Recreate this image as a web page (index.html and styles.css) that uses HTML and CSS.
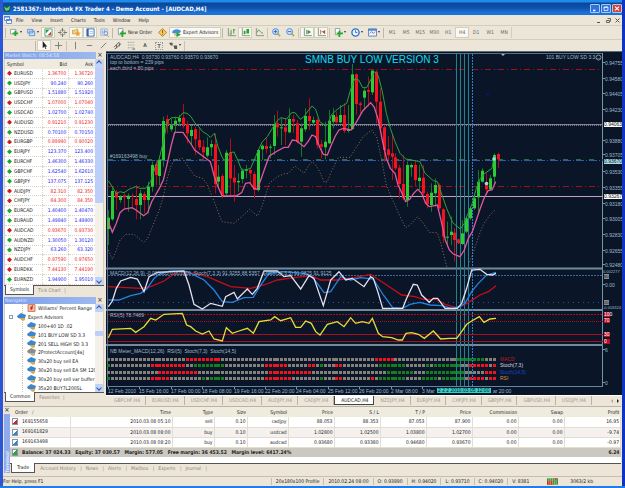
FILE: index.html
```html
<!DOCTYPE html>
<html lang="en">
<head>
<meta charset="utf-8">
<title>Interbank FX Trader 4</title>
<link rel="stylesheet" href="styles.css">
</head>
<body>
<div class="window">
  <header class="titlebar">
    <svg class="app-icon" viewBox="0 0 8 8"><path fill="#1b5a4a" d="M0 1h7v6H1z"/><path fill="#5fd08a" d="M1 2l3 1 3-2-1 4-3 1z"/></svg>
    <h1>2581367: Interbank FX Trader 4 - Demo Account - [AUDCAD,H4]</h1>
    <button class="win-btn" aria-label="Minimize"><svg viewBox="0 0 9 9"><path d="M2 7h3" stroke="#fff" stroke-width="2"/></svg></button>
    <button class="win-btn" aria-label="Maximize"><svg viewBox="0 0 9 9"><path d="M2 2.5h5v4.500h-5zM2 3h5" stroke="#fff" fill="none"/></svg></button>
    <button class="win-btn close" aria-label="Close"><svg viewBox="0 0 9 9"><path d="M2 2l5 5M7 2l-5 5" stroke="#fff" stroke-width="1.500"/></svg></button>
  </header>

  <nav class="menubar">
    <svg class="doc-icon" viewBox="0 0 8 8"><path fill="#fff" stroke="#6a94d8" d="M.5.5h5v4h-5zM2.500 3.500h5v4h-5z"/><path stroke="#3b72d0" d="M0 1h6M2 4h6"/></svg>
    <button>File</button><button>View</button><button>Insert</button><button>Charts</button><button>Tools</button><button>Window</button><button>Help</button>
    <span class="spacer"></span>
    <button class="mdi" aria-label="Minimize chart"><svg viewBox="0 0 7 7"><path d="M1 5.500h3" stroke="#555"/></svg></button>
    <button class="mdi" aria-label="Restore chart"><svg viewBox="0 0 7 7"><path d="M2.500 1.500h3v3M1.500 3.500h3v2h-3z" fill="none" stroke="#666"/></svg></button>
    <button class="mdi" aria-label="Close chart"><svg viewBox="0 0 7 7"><path d="M1.500 1.500l4 4M5.500 1.500l-4 4" stroke="#555"/></svg></button>
  </nav>

  <div class="toolbar">
    <i class="grip"></i>
    <button class="tool drop" aria-label="New chart"><svg viewBox="0 0 10 10"><path fill="#fff" stroke="#8a9cae" d="M.5 1.500h6v5h-6z"/><path fill="#22a82e" d="M5 3h2v2h2v2H7v2H5V7H3V5h2z"/></svg></button>
    <button class="tool drop" aria-label="Profiles"><svg viewBox="0 0 10 10"><path fill="#cfe3fa" stroke="#5d8fd0" d="M.5 1.500h6v4h-6zM2.500 3.500h6v5h-6z"/></svg></button>
    <button class="tool on" aria-label="Market watch"><svg viewBox="0 0 10 10"><path fill="#fff" stroke="#4a9a74" d="M1 1h8v8H1z"/><path fill="#2b9c3e" d="M2 2h4L2 6z"/><path fill="#dd3c28" d="M8 8H4l4-4z"/></svg></button>
    <button class="tool" aria-label="Data window"><svg viewBox="0 0 10 10"><circle cx="5" cy="5" r="3" fill="none" stroke="#8c8c84"/><path stroke="#6f6f6a" d="M5 0v4M5 6v4M0 5h4M6 5h4"/></svg></button>
    <button class="tool on" aria-label="Navigator"><svg viewBox="0 0 10 10"><path fill="#f5d37a" stroke="#caa04a" d="M.5 2.500h3l1-1h2v5h-6z"/><path fill="#f0a030" d="M6.500 3l1 2 2.500.3-2 1.500.6 2.500-2.100-1.300-2.200 1.300.7-2.500-2-1.500 2.500-.3z"/></svg></button>
    <button class="tool on" aria-label="Terminal"><svg viewBox="0 0 10 10"><path fill="#fff" stroke="#2f66b8" d="M1 1h8v8H1z"/><path fill="#2f66b8" d="M1 1h2v8H1z"/><path stroke="#a8c0e0" d="M4 4h4M4 6h4"/></svg></button>
    <button class="tool" aria-label="Strategy tester"><svg viewBox="0 0 10 10"><path fill="#dbe6f4" stroke="#9db4d4" d="M1 1h7v7H1z"/><path fill="none" stroke="#7d9cc8" d="M3 6V3M5 6V2"/><circle cx="6.500" cy="6" r="2" fill="#eef" stroke="#6288c0"/><path stroke="#c0a050" d="M8 8l2 2"/></svg></button>
    <i class="grip"></i>
    <button class="tool text"><svg viewBox="0 0 10 10"><path fill="#fff" stroke="#8b98a8" d="M1.500.5h5v7h-5z"/><path fill="#22a82e" d="M5 3h2v2h3v2H7v3H5V7H3V5h2z"/></svg>New Order</button>
    <button class="tool" aria-label="MetaEditor"><svg viewBox="0 0 10 10"><path fill="#f2c95a" stroke="#b9832c" d="M5 .5L9.500 5 5 9.500.5 5z"/><path stroke="#8a4f18" d="M5 2.500v3M5 6.500v1"/></svg></button>
    <button class="tool text on"><svg viewBox="0 0 10 10"><path fill="#3f8fe0" d="M0 5c1-4 8-5 10-1L8 6H2z"/><path fill="#e8c060" d="M2 6h5v3H3z"/><path fill="#22a82e" d="M5 5l5 2.500L5 10z"/></svg>Expert Advisors</button>
    <i class="grip"></i>
    <button class="tool" aria-label="Bar chart"><svg viewBox="0 0 10 10"><path fill="none" stroke="#8c8c80" d="M1.500 0v8.500H10"/><path stroke="#2fa03a" d="M4.500 2v6M7.500 1v5M3 6h1M7 2h2" /></svg></button>
    <button class="tool on" aria-label="Candlesticks"><svg viewBox="0 0 10 10"><path fill="none" stroke="#8c8c80" d="M1.500 0v8.500H10"/><path fill="#25a52f" d="M3 3h2v4H3zM6 1h3v5H6z"/></svg></button>
    <button class="tool" aria-label="Line chart"><svg viewBox="0 0 10 10"><path fill="none" stroke="#8c8c80" d="M1.500 0v8.500H10"/><path fill="none" stroke="#3aa545" d="M2 5l2-3 3 3 2 1"/></svg></button>
    <i class="sep"></i>
    <button class="tool" aria-label="Zoom in"><svg viewBox="0 0 10 10"><path stroke="#d2a640" stroke-width="2" d="M6 6l3 3"/><circle cx="4" cy="4" r="3.300" fill="#cfe6fb" stroke="#4486d4"/><path stroke="#2765b8" d="M2 4h4M4 2v4"/></svg></button>
    <button class="tool" aria-label="Zoom out"><svg viewBox="0 0 10 10"><path stroke="#d2a640" stroke-width="2" d="M6 6l3 3"/><circle cx="4" cy="4" r="3.300" fill="#cfe6fb" stroke="#4486d4"/><path stroke="#2765b8" d="M2 4h4"/></svg></button>
    <i class="sep"></i>
    <button class="tool on" aria-label="Auto scroll"><svg viewBox="0 0 10 10"><path fill="none" stroke="#7c8c80" d="M1.500 0v8.500H10M4 2v5"/><path fill="#25a52f" d="M5 2l4 2.500L5 7z"/></svg></button>
    <button class="tool on" aria-label="Chart shift"><svg viewBox="0 0 10 10"><path fill="none" stroke="#7c8c80" d="M1.500 0v8.500H10M4 2v5M5 4h2"/><path fill="#d04030" d="M9 2v5L6 4.500z"/></svg></button>
    <i class="sep"></i>
    <button class="tool drop" aria-label="Indicators"><svg viewBox="0 0 10 10"><path fill="#fff" stroke="#8b98a8" d="M1.500.5h5v7h-5z"/><path fill="#22a82e" d="M5 3h2v2h3v2H7v3H5V7H3V5h2z"/></svg></button>
    <button class="tool drop" aria-label="Periods"><svg viewBox="0 0 10 10"><circle cx="5" cy="5" r="4" fill="#e8f2fe" stroke="#2f6fca" stroke-width="1.500"/><path fill="none" stroke="#2f6fca" d="M5 2.500V5h2"/></svg></button>
    <button class="tool drop" aria-label="Templates"><svg viewBox="0 0 10 10"><path fill="#eaf3ff" stroke="#4a82cc" d="M.5 1h9v8h-9z"/><path stroke="#4a82cc" stroke-width="2" d="M0 2h10"/><path fill="none" stroke="#c06040" d="M2 6l2-2 2 2 2-2"/></svg></button>
    <i class="grip"></i>
    <div class="periods">
      <button class="tool">M1</button><button class="tool">M5</button><button class="tool">M15</button><button class="tool">M30</button><button class="tool">H1</button><button class="tool on">H4</button><button class="tool">D1</button><button class="tool">W1</button><button class="tool">MN</button>
    </div>
  </div>

  <div class="toolbar drawing">
    <i class="grip"></i>
    <button class="tool on" aria-label="Cursor"><svg viewBox="0 0 10 10"><path fill="#222" d="M3 0v8l2-2 1 3 1-.5L6 6h2z"/></svg></button>
    <button class="tool" aria-label="Crosshair"><svg viewBox="0 0 10 10"><path stroke="#77776f" d="M5 1v8M1 5h8"/></svg></button>
    <i class="sep"></i>
    <button class="tool" aria-label="Vertical line"><svg viewBox="0 0 10 10"><path stroke="#77776f" d="M5 1v8"/></svg></button>
    <button class="tool" aria-label="Horizontal line"><svg viewBox="0 0 10 10"><path stroke="#77776f" d="M2 5h6"/></svg></button>
    <button class="tool" aria-label="Trendline"><svg viewBox="0 0 10 10"><path stroke="#77776f" d="M2 8l6-6"/></svg></button>
    <button class="tool" aria-label="Channel"><svg viewBox="0 0 10 10"><path stroke="#5c5c55" d="M1 7l6-6M2 9l7-6M4 4v4M7 2v4"/></svg></button>
    <button class="tool" aria-label="Fibonacci"><svg viewBox="0 0 10 10"><path stroke="#8c8c84" stroke-dasharray="1 1" d="M1 1.500h8M1 4.500h8M1 7.500h8"/><path stroke="#555" d="M6 9h3"/></svg></button>
    <button class="tool letter">A</button>
    <button class="tool letter"><span class="label-box">T</span></button>
    <button class="tool drop" aria-label="Arrows"><svg viewBox="0 0 10 10"><path fill="#555" d="M0 2h4v3H2zM5 5h4v4H6z"/></svg></button>
    <i class="sep"></i>
  </div>

  <main class="workspace">
    <aside class="side">
      <section class="panel">
        <h2 class="panel-title"><span>Market Watch: 08:54:58</span><button aria-label="Close market watch">×</button></h2>
        <div class="scroll-area">
          <table class="quotes">
            <thead><tr><th>Symbol</th><th>Bid</th><th>Ask</th></tr></thead>
            <tbody id="quotes"></tbody>
          </table>
          <div class="scrollbar watch-scroll"><i class="arrow up"></i><i class="thumb"></i><i class="arrow down"></i></div>
        </div>
        <div class="tabs"><button class="active">Symbols</button><button>Tick Chart</button></div>
      </section>
      <section class="panel">
        <h2 class="panel-title"><span>Navigator</span><button aria-label="Close navigator">×</button></h2>
        <div class="scroll-area">
          <ul class="tree" id="tree"></ul>
          <div class="scrollbar nav-scroll"><i class="arrow up"></i><i class="thumb"></i><i class="arrow down"></i></div>
        </div>
        <div class="tabs"><button class="active">Common</button><button>Favorites</button></div>
      </section>
    </aside>
    <div class="charts">
      <svg class="chart" id="chart" viewBox="106 51 516 344" role="img" aria-label="AUDCAD H4 chart"></svg>
      <div class="chart-tabs">
        <button>GBPCHF,H4</button><button>EURUSD,H4</button><button>USDCHF,H4</button><button>USDCAD,H4</button><button>AUDJPY,H4</button><button>CADJPY,H4</button><button class="active">AUDCAD,H4</button><button>NZDJPY,H4</button><button>EURJPY,H4</button><button>CHFJPY,H4</button><button>GBPJPY,H4</button><button>GBPUSD,H4</button><button>USDJPY,H4</button>
        <span class="tab-arrows"><i class="left"></i><i class="right"></i></span>
      </div>
    </div>
  </main>

  <section class="terminal">
    <div class="terminal-side"><button aria-label="Close terminal">×</button><span>Terminal</span></div>
    <div class="terminal-body">
      <table class="orders">
        <colgroup><col class="c-order"><col class="c-time"><col class="c-type"><col class="c-size"><col class="c-symbol"><col class="c-num"><col class="c-num"><col class="c-num"><col class="c-num"><col class="c-num"><col class="c-num"><col class="c-profit"></colgroup>
        <thead><tr><th>Order &nbsp; <span class="sort">∕</span></th><th>Time</th><th>Type</th><th>Size</th><th>Symbol</th><th>Price</th><th>S / L</th><th>T / P</th><th>Price</th><th>Commission</th><th>Swap</th><th>Profit</th></tr></thead>
        <tbody>
          <tr><td><i class="order sell"></i>169155658</td><td>2010.03.08 05:10</td><td>sell</td><td>0.10</td><td>cadjpy</td><td>88.053</td><td>88.353</td><td>87.053</td><td>87.900</td><td>0.00</td><td>0.00</td><td>16.95</td></tr>
          <tr class="alt"><td><i class="order"></i>169161829</td><td>2010.03.08 08:00</td><td>buy</td><td>0.10</td><td>usdcad</td><td>1.02800</td><td>1.02500</td><td>1.03800</td><td>1.02700</td><td>0.00</td><td>0.00</td><td>-9.74</td></tr>
          <tr><td><i class="order"></i>169163498</td><td>2010.03.08 08:20</td><td>buy</td><td>0.10</td><td>audcad</td><td>0.93680</td><td>0.93380</td><td>0.94680</td><td>0.93670</td><td>0.00</td><td>0.00</td><td>-0.97</td></tr>
        </tbody>
        <tfoot><tr><td colspan="11"><i class="order total"></i>Balance: 37 024.33&nbsp;&nbsp; Equity: 37 030.57&nbsp;&nbsp; Margin: 577.05&nbsp;&nbsp; Free margin: 36 453.52&nbsp;&nbsp; Margin level: 6417.24%</td><td>6.24</td></tr></tfoot>
      </table>
      <div class="tabs"><button class="active">Trade</button><button>Account History</button><button>News</button><button>Alerts</button><button>Mailbox</button><button>Experts</button><button>Journal</button></div>
    </div>
  </section>

  <footer class="status">
    <span class="help">For Help, press F1</span>
    <span>20x180x100 Profile</span><span>2010.02.24 08:00</span><span>O: 0.93890</span><span>H: 0.94020</span><span>L: 0.93710</span><span>C: 0.94020</span><span class="volume">V: 8381</span>
    <span class="traffic"><svg viewBox="0 0 12 7"><path fill="#2d9c3c" d="M0 0h12v7H0z"/><path fill="#d03020" d="M0 3h7v4H0zM8 0h3v2H8z"/><path stroke="#e8e8d0" stroke-width=".5" d="M2 0v7M4 0v7M6 0v7M8 0v7M10 0v7"/></svg>3063/2 kb</span>
  </footer>
</div>
<script src="app.js"></script>
</body>
</html>
```
FILE: styles.css
```css
* { box-sizing: border-box; }

body {
  margin: 0;
  background: #1c7ee6;
  color: #222;
  font: 5px/7px "DejaVu Sans Condensed", "DejaVu Sans", sans-serif;
}

button {
  margin: 0;
  padding: 0;
  border: 0;
  background: none;
  color: inherit;
  font: inherit;
}

h1, h2, ul { margin: 0; padding: 0; font: inherit; list-style: none; }
table { border-collapse: collapse; border-spacing: 0; }
svg { display: block; }

.window {
  display: flex;
  flex-direction: column;
  min-height: calc(100vh - 2px);
  border: solid #2b57d6;
  border-width: 0 3px;
  border-right-color: #0f34c0;
  background: #ece5d8;
}

/* Title bar and menu */
.titlebar {
  display: flex;
  align-items: center;
  gap: 1px;
  height: 15px;
  padding: 2px 0 0;
  background: linear-gradient(#1f8bec 0 2px, #0c4596 3px, #0f53ad 8px, #1a74dd 13px, #1c6ed6);
  color: #fff;
}
.titlebar h1 {
  flex: 1;
  padding-left: 1px;
  font: bold 6px/8px "DejaVu Sans Condensed", "DejaVu Sans", sans-serif;
  white-space: nowrap;
}
.app-icon { width: 8px; height: 8px; }
.win-btn {
  width: 10px;
  height: 9px;
  border: 1px solid #a9c8f4;
  border-radius: 1px;
  background: #2f72dc;
}
.win-btn.close { background: #dd4030; }
.win-btn svg { width: 8px; height: 7px; }

.menubar {
  display: flex;
  align-items: center;
  gap: 8px;
  height: 10px;
  padding: 0 1px;
}
.doc-icon { width: 8px; height: 8px; margin-right: -4px; }
.spacer { flex: 1; }
.mdi svg { width: 7px; height: 7px; }
.mdi + .mdi { margin-left: -6px; }

/* Toolbars */
.toolbar {
  display: flex;
  align-items: center;
  height: 14px;
  padding-left: 1px;
  border-top: 1px solid #cfd0bb;
}
.toolbar.drawing { height: 12px; padding-left: 31px; }
.grip { width: 1px; height: 10px; margin: 0 1px; background: #bdb9a6; }
.sep { width: 1px; height: 10px; margin: 0 1px; background: #c9c5b3; }
.tool {
  display: flex;
  align-items: center;
  justify-content: center;
  width: 14px;
  height: 11px;
  border: 1px solid transparent;
  white-space: nowrap;
}
.tool svg { width: 9px; height: 9px; flex: none; }
.tool.on { border-color: #d2cebd; background: #faf8f2; }
.tool.drop { width: 17px; }
.tool.drop::after {
  content: "";
  margin-left: 1px;
  border: 1px solid transparent;
  border-top: 2px solid #333;
}
.tool.text { width: auto; gap: 2px; padding: 0 2px; }
.periods { display: flex; color: #66665e; border-right: 1px solid #cfd0bb; }
.letter { font-weight: bold; color: #555; }
.label-box { padding: 0 1px; border: 1px dotted #999; line-height: 6px; }

/* Workspace */
.workspace {
  display: grid;
  grid-template-columns: 102px minmax(0, 1fr);
  gap: 1px;
}
.side { display: flex; flex-direction: column; gap: 2px; padding: 1px 1px 0; }
.panel-title {
  display: flex;
  align-items: center;
  height: 7px;
  color: #dce6fa;
}
.panel-title span { flex: 1; padding-left: 1px; background: linear-gradient(90deg, #7d9eea, #9db9ee); }
.panel-title button { width: 8px; color: #222; font-size: 7px; }
.scroll-area { display: flex; background: #fff; border: 1px solid #d5cfbf; border-width: 0 1px; }
.quotes { flex: 1; height: 226px; table-layout: fixed; }
.quotes th {
  height: 10px;
  background: #efebdf;
  font-weight: normal;
  text-align: right;
}
.quotes th, .quotes td { padding: 0 2px; line-height: 7px; }
.quotes th:first-child, .quotes td:first-child { width: 37px; padding: 0 0 0 2px; text-align: left; }
.quotes td { border: 1px dotted #ddd4c6; border-width: 0 0 1px 1px; text-align: right; }
.quotes .up { color: #2626f0; }
.quotes .down { color: #f01818; }
.quotes td:first-child { border-left: 0; color: #222; }
.mark {
  display: inline-block;
  width: 5px;
  height: 5px;
  margin-right: 2px;
  clip-path: polygon(50% 0, 100% 50%, 50% 100%, 0 50%);
  vertical-align: -1px;
}
.up .mark { background: #18a828; }
.down .mark { background: #d01c1c; }

.scrollbar { display: flex; flex-direction: column; width: 8px; background: #f3f1ea; }
.arrow { height: 8px; background: #bfd2fa; border-radius: 1px; display: grid; place-items: center; }
.arrow::after { content: ""; width: 3px; height: 3px; border: solid #3b5590; border-width: 1px 0 0 1px; }
.arrow.up::after { transform: rotate(45deg); }
.arrow.down::after { transform: rotate(225deg); }
.thumb { background: #bccffb; border-radius: 1px; }
.watch-scroll .thumb { height: 136px; }
.nav-scroll .thumb { height: 5px; margin-top: 19px; }
.arrow.down { margin-top: auto; }

.tabs { display: flex; height: 10px; padding-left: 1px; border-top: 1px solid #555; color: #8c887c; }
.tabs button { padding: 0 4px; position: relative; }
.tabs button:not(.active)::after { content: "|"; position: absolute; right: -1px; }
.tabs .active {
  margin-top: -1px;
  border: 1px solid #555;
  border-top: 0;
  background: #fff;
  color: #222;
}

.tree { flex: 1; display: grid; grid-template-rows: repeat(10, 1fr); height: 88px; width: 91px; }
.tree li {
  display: flex;
  align-items: center;
  gap: 2px;
  padding-left: 22px;
  overflow: hidden;
  white-space: nowrap;
  line-height: 8px;
  background: repeating-linear-gradient(#c9c4b8 0 1px, transparent 1px 2px) 17px 0 / 1px 100% no-repeat;
}
.tree li.branch { padding-left: 4px; background: none; }
.tree svg { width: 9px; height: 8px; flex: none; }
.tree .expander { width: 4px; height: 4px; margin-right: 2px; border: 1px solid #8a9cb8; }

.charts { min-width: 0; display: flex; flex-direction: column; }
.chart { width: 100%; height: auto; background: #0a1628; }
.chart text { font: 5px "Liberation Sans", Arial, sans-serif; fill: #9db8cc; }
.chart .headline { font-size: 10px; fill: #10dcf0; }
.chart .small { font-size: 4px; }
.chart .on-light { fill: #111; }
.chart .on-red { fill: #fff; }
.chart-tabs { display: flex; height: 10px; padding-left: 2px; color: #a09c90; border-top: 1px solid #fff; }
.chart-tabs button {
  flex: 0 1 auto;
  padding: 0 5px 0 6px;
  border-right: 1px solid #b9b5a6;
}
.chart-tabs .active { border: 1px solid #444; border-top: 0; background: #fff; color: #222; }
.tab-arrows { display: flex; align-items: center; gap: 4px; margin-left: auto; padding-right: 1px; }
.tab-arrows i { border: 2px solid transparent; }
.tab-arrows .left { border-right-color: #aaa69a; }
.tab-arrows .right { border-left-color: #222; }

/* Terminal */
.terminal { display: flex; margin: 1px 1px 0; border-top: 1px solid #b8b4a4; }
.terminal-side { display: flex; flex-direction: column; align-items: center; width: 6px; }
.terminal-side button { height: 7px; font-size: 7px; }
.terminal-side span {
  flex: 1;
  width: 6px;
  background: #8eaaea;
  color: #dce6fa;
  font-weight: bold;
  line-height: 6px;
  writing-mode: vertical-rl;
  transform: rotate(180deg);
}
.terminal-body { flex: 1; min-width: 0; background: linear-gradient(#fff 57px, #ece5d8 57px); }
.terminal .tabs button { padding: 0 5px; }
.orders { width: 100%; table-layout: fixed; margin-bottom: 6px; }
.orders th { height: 10px; background: #efebdf; font-weight: normal; }
.orders td { height: 10px; border-right: 1px solid #e4ddd0; border-bottom: 1px solid #e4ddd0; }
.orders th, .orders td { padding: 0 1px; text-align: right; white-space: nowrap; line-height: 7px; }
.orders th:first-child { padding-left: 5px; text-align: left; }
.orders td:first-child { text-align: left; }
.orders .alt td { background: #f4f1ee; }
.orders tfoot td { border: 0; background: #cbc8c0; font-weight: bold; }
.sort { color: #4a9a4a; }
.c-order { width: 60px; }
.c-time { width: 102px; }
.c-type { width: 42px; }
.c-size { width: 33px; }
.c-symbol { width: 41px; }
.c-num { width: 46px; }
.order {
  display: inline-block;
  width: 6px;
  height: 7px;
  margin: 0 4px 0 1px;
  border: 1px solid #8a96a4;
  background: linear-gradient(135deg, #fff 55%, #2a86d8 55%);
  vertical-align: middle;
}
.order.sell { background: linear-gradient(135deg, #fff 55%, #d82020 55%); }
.order.total { background: linear-gradient(135deg, #fff 35%, #28a838 35%); }

/* Status bar */
.status {
  display: flex;
  align-items: center;
  height: 10px;
  margin-top: auto;
  border-top: 1px solid #c4c0b0;
}
.status span { padding: 0 4px; border-left: 1px solid #c4c0b0; white-space: nowrap; }
.status .help { flex: 1; padding-left: 0; border: 0; }
.status .volume { padding-right: 14px; }
.status .traffic { display: flex; gap: 12px; padding-right: 29px; border: 0; }
.traffic svg { width: 11px; height: 7px; }
```
FILE: app.js
```js
const quotes = `EURUSD 1.36700 1.36720 d
USDJPY 90.240 90.260 u
GBPUSD 1.51880 1.51920 u
USDCHF 1.07000 1.07040 d
USDCAD 1.02700 1.02740 u
AUDUSD 0.91210 0.91230 d
NZDUSD 0.70100 0.70150 u
EURGBP 0.89990 0.90020 d
EURJPY 123.370 123.400 u
EURCHF 1.46300 1.46330 u
GBPCHF 1.62540 1.62610 u
GBPJPY 137.075 137.125 u
AUDJPY 82.310 82.350 d
CHFJPY 84.300 84.350 d
EURCAD 1.40400 1.40470 u
EURAUD 1.49840 1.49900 u
AUDCAD 0.93670 0.93730 d
AUDNZD 1.30050 1.30120 u
NZDJPY 63.260 63.320 u
AUDCHF 0.97590 0.97650 d
EURDKK 7.44130 7.44190 d
EURNZD 1.94900 1.95010 u`.split("\n").map(line => line.split(" "));

document.getElementById("quotes").innerHTML = quotes.map(([symbol, bid, ask, dir]) =>
  `<tr class="${dir === "u" ? "up" : "down"}"><td><i class="mark"></i>${symbol}</td><td>${bid}</td><td>${ask}</td></tr>`).join("");

const advisor = (hat, face) => `<svg viewBox="0 0 9 8"><path fill="${hat}" d="M0 3l4-3 5 2-1 3-3 1-4-1z"/><path fill="${face}" d="M3 5h5v2L6 8 4 7z"/></svg>`;
const blueHat = advisor("#3b86cc", "#d6ab55");
const greyHat = advisor("#8d8d88", "#b4b0a4");
const fIcon = `<svg viewBox="0 0 9 8"><path fill="#f5b8a0" stroke="#d88060" d="M1 .5h7v7H1z"/><path stroke="#a03020" fill="none" d="M6 2H5L4 6M3 4h3"/></svg>`;
document.getElementById("tree").innerHTML =
  `<li>${fIcon}Williams' Percent Range</li><li class="branch"><i class="expander"></i>${blueHat}Expert Advisors</li>` +
  ["100+40 1D .02", "101 BUY LOW SD 3.3", "201 SELL HIGH SD 3.3", "2ProtectAccount[4a]", "30x20 buy sell EA",
    "30x20 buy sell EA SM 120", "30x20 buy sell var buffer", "35x20 BUY7L200SL"]
    .map(name => `<li>${name.startsWith("2P") ? greyHat : blueHat}${name}</li>`).join("");

/* Chart series are stored on a grid three times finer than the drawing. */
const STEP = 11.8, FIRST = 13;
const px = x => +(104 + x / 3).toFixed(2);
const priceY = y => +(50 + y / 3).toFixed(2);
const paneY = y => +(265 + y / 3).toFixed(2);
const barX = i => Math.round(px(FIRST + STEP * i));

/* direction, high, body top, body bottom, low */
const bars = `g480,503,537,585 g410,423,508,512 r420,425,443,480 g435,440,450,458 r430,436,442,475 g430,437,447,485 r430,437,440,472 r405,447,465,508 g420,430,465,508 r425,432,450,490 g395,410,450,490 g335,345,410,425 r330,342,375,405 g320,330,378,405 g200,213,330,350 r195,207,225,250 g205,226,238,245 g200,212,222,250 g195,204,215,228 r162,203,225,235 r212,222,250,280 g225,240,258,285 r230,238,268,315 r235,270,292,300 r270,290,307,335 g262,292,317,322 g270,282,292,318 r250,283,402,430 g345,380,395,415 r372,378,435,445 g300,308,430,435 r265,308,385,435 r345,383,397,455 g370,393,397,425 g355,362,387,400 g345,357,362,385 r355,360,370,400 r365,372,420,445 g297,300,420,425 g283,287,298,330 r262,288,297,310 g283,290,293,325 g195,222,288,315 r182,220,232,260 g205,232,235,285 r205,232,245,285 g175,207,247,250 r195,207,215,248 r210,220,275,280 g220,235,275,320 g175,198,238,245 r145,198,213,240 g200,210,218,225 r205,210,285,295 r270,283,290,325 g215,275,292,328 g180,212,280,282 g175,195,215,235 r185,200,217,220 g165,195,217,220 r160,195,243,250 g165,237,243,248 g42,73,237,240 r70,73,162,195 r155,160,165,190 g115,122,143,180 r80,120,125,170 g60,62,127,135 r60,65,155,220 r115,155,235,245 r225,232,300,335 r258,298,315,330 r255,310,320,390 r310,322,355,360 r345,353,402,445 r315,402,445,450 g335,345,450,470 g340,345,352,380 r330,345,390,410 g345,383,393,420 r345,383,430,438 r425,432,462,475 g400,428,465,485 g385,405,430,470 r400,405,475,478 r475,478,560,578 g515,560,562,590 g500,545,555,585 r535,548,570,635 r565,568,580,582 g510,550,582,585 g500,505,545,550 g470,475,505,510 g430,445,475,480 g360,395,442,490 g355,362,395,398 r370,400,418,430 g375,385,418,420 g310,315,380,405 r308,312,328,355`.split(" ");

const upper = "13,393 25,410 37,432 48,425 60,428 75,418 95,410 107,415 125,415 140,395 154,350 166,325 178,275 190,215 202,203 225,203 237,188 249,190 261,200 272,218 284,230 296,245 308,252 319,262 331,250 342,290 354,320 360,332 378,308 390,306 401,330 413,360 425,360 440,355 455,320 463,300 475,275 490,260 505,235 520,212 531,203 548,207 563,188 573,188 589,208 600,200 612,183 624,168 635,178 647,215 661,225 673,223 682,195 694,183 708,172 728,160 741,115 752,87 764,90 776,113 788,113 800,90 811,65 823,78 835,125 847,190 859,235 873,275 888,310 905,327 948,335 963,370 988,392 1000,395 1008,418 1028,475 1046,518 1069,537 1081,520 1088,500 1105,460 1117,415 1129,385 1140,372 1164,355 1168,330";
const lower = "13,515 25,547 37,520 48,488 60,477 84,473 96,480 119,497 131,488 143,455 166,415 178,390 190,340 202,285 212,247 237,247 249,265 261,282 272,300 296,318 319,335 331,380 342,410 354,437 396,438 413,428 425,400 437,398 450,415 460,418 472,385 484,350 496,318 520,303 540,292 553,292 565,270 577,272 600,290 612,275 624,255 635,260 647,292 658,313 670,315 682,285 694,258 705,240 718,235 741,240 758,215 776,183 800,158 811,172 823,210 835,270 847,325 859,355 873,370 882,405 894,430 905,455 917,448 929,430 941,418 953,430 965,460 976,470 1000,465 1012,515 1024,570 1036,600 1048,612 1068,620 1081,600 1093,565 1105,545 1117,510 1129,475 1140,445 1152,422 1164,420 1175,395";
const lowest = ["13,600 25,628 37,600 48,570 65,553 90,553 119,577 131,565 143,535 166,480 178,440 190,385 202,345 213,330 237,325 249,345 272,378 296,385 308,400 325,440 342,485 354,515 390,520 413,500 437,478 460,498 472,475 496,400 520,380 540,372 553,370 573,348 600,370 612,350 624,335 635,345 647,365 661,397 670,395 682,365 703,322 738,322 752,300 776,262 803,240 818,260 835,340 847,405 859,435 873,465 888,500 905,533 918,525 941,500 958,520 976,547 1000,548 1012,585 1028,650", "1093,645 1105,615 1117,580 1129,545 1140,520 1158,495 1175,478"];
const stochFast = "13,125 25,108 37,70 50,48 80,37 100,42 120,80 135,35 160,22 240,18 255,60 270,118 295,132 320,115 355,124 365,95 390,82 400,102 430,72 445,88 460,70 480,18 520,18 540,35 560,32 590,72 615,32 630,40 658,122 680,45 705,20 725,45 745,40 780,65 800,35 808,40 823,85 836,130 896,130 908,100 928,58 940,60 953,90 976,112 988,100 1001,100 1023,130 1060,130 1073,115 1088,70 1103,15 1128,13 1148,28 1165,30 1176,25";
const stochSlow = "13,105 45,105 80,92 110,85 130,70 150,40 170,25 200,18 250,20 300,45 330,75 355,110 385,112 420,98 448,97 470,60 495,25 540,20 600,25 620,32 640,55 660,83 680,80 710,35 740,45 770,38 808,42 838,90 866,128 896,130 918,118 948,112 978,120 1013,122 1043,130 1068,125 1083,115 1103,80 1123,55 1148,30 1176,22";
const macd = "13,65 110,70 140,65 180,48 220,20 270,25 310,35 345,50 380,65 440,70 480,60 520,45 570,38 620,32 650,45 700,45 750,38 800,28 848,60 893,90 933,95 958,103 998,103 1023,118 1058,128 1083,118 1108,103 1128,90 1153,80 1176,62";
const rsi = "13,218 25,193 80,190 95,202 110,192 120,185 140,160 155,165 180,148 235,145 248,180 260,185 275,198 295,207 315,198 330,222 355,228 367,188 385,205 405,198 430,190 448,205 465,170 500,165 512,155 530,167 560,158 575,187 590,187 605,168 622,175 635,200 648,210 670,178 700,170 720,185 740,158 755,175 775,170 795,175 805,160 823,205 836,215 863,218 883,225 895,225 906,205 923,203 943,208 961,220 988,198 1010,222 1038,220 1058,220 1073,200 1088,178 1103,168 1126,155 1140,172 1158,162 1176,160";

/* Signal rows as run lengths: x = neutral, r = down, g = up */
const signals = [
  [282, "20x 9r 39x 5r 16x 7g 3x"],
  [301, "1g 10x 9r 2x 8g 10x 6r 5x 2r 1x 1g 3x 2r 9x 7g 5x 1g 1x 7g 2x 5r 1x 1r"],
  [321, "13x 10r 18x 11r 19x 7g 3x 10g 5x 3r"],
  [340, "1g 10x 5r 8x 1g 1x 4g 10x 7r 7x 1g 3x 2r 7x 1r 1x 7g 4x 4g 1x 6g 1x 4r 1x 2r"]
];

const out = [];
const line = (x1, y1, x2, y2, color, dash = "", width = 1) =>
  out.push(`<path d="M${x1} ${y1}L${x2} ${y2}" stroke="${color}" stroke-width="${width}" stroke-dasharray="${dash}"/>`);
const rect = (x, y, w, h, fill) => out.push(`<rect x="${x}" y="${y}" width="${w}" height="${h}" fill="${fill}"/>`);
const text = (x, y, str, cls = "", fill = "") =>
  out.push(`<text x="${x}" y="${y}" class="${cls}"${fill ? ` style="fill:${fill}"` : ""}>${str}</text>`);
const curve = (points, mapY, color, dash = "", width = 1) => {
  const list = points.split(" ").map(p => { const [x, y] = p.split(","); return `${px(+x)},${mapY(+y)}`; }).join(" ");
  out.push(`<polyline points="${list}" fill="none" stroke="${color}" stroke-width="${width}" stroke-dasharray="${dash}"/>`);
};

/* Pane frames */
line(106, 51.5, 622, 51.5, "#5c6c70");
line(106, 53.5, 603, 53.5, "#52708a");
line(107.5, 53, 107.5, 386, "#52708a");
line(602.5, 53, 602.5, 386, "#7494a8");
[268.5, 310, 345].forEach(y => line(106, y, 603, y, "#728b9b", "", 2));
line(107, 386.5, 603, 386.5, "#5f86a4");

/* Levels in the price pane */
line(108, 69.5, 600, 69.5, "#a80c18", "6 3 1 3");
line(108, 124.5, 603, 124.5, "#8a809c");
line(108, 125.5, 603, 125.5, "#77788a", "1 1");
line(108, 160.5, 603, 160.5, "#2c5fa0", "8 2 1 2");
line(108, 159.5, 603, 159.5, "#2c6a48", "5 8");
line(108, 186.5, 600, 186.5, "#a80c18", "6 3 1 3");
line(108, 196.5, 603, 196.5, "#c0a2c0");

/* Period markers */
[456.5, 460.5, 464.5, 468.5].forEach(x => line(x, 54, x, 386, "#27808e"));
line(472.5, 54, 472.5, 386, "#2f7fd0", "2 1");

curve(lowest[0], priceY, "#8d6e5c", "1 2");
curve(lowest[1], priceY, "#8d6e5c", "1 2");
bars.forEach((bar, i) => {
  const [high, top, bottom, low] = bar.slice(1).split(",").map(v => priceY(+v));
  const up = bar[0] === "g", x = barX(i);
  line(x + .5, high, x + .5, low, up ? "#157a28" : "#b00c18");
  rect(x - 1, top, 3, Math.max(1, bottom - top), up ? "#2ccc34" : "#f4121c");
});
curve(upper, priceY, "#2da03c");
curve(lower, priceY, "#e0589c", "", 1.3);
[[494, 159], [486.500, 183.500]].forEach(([x, y]) => out.push(`<circle cx="${x}" cy="${y}" r="1.800" fill="#a6d8f4"/>`));
rect(495, 69, 3, 1, "#1010b0");
rect(486, 94, 3, 1, "#1010b0");
out.push('<path d="M501 54h4l-2 2z" fill="#aab8c4"/>');

/* Oscillator panes */
line(108, 275.5, 603, 275.5, "#44649c", "2 1");
line(108, 302.5, 603, 302.5, "#2c5090", "1 4");
curve(macd, paneY, "#c80c18", "", 1.3);
curve(stochSlow, paneY, "#2484e4", "", 1.3);
curve(stochFast, paneY, "#e4e0f0", "", 1.3);
line(108, 314.5, 603, 314.5, "#b00c1c", "2 1");
line(108, 321.5, 603, 321.5, "#b00c1c", "1 1");
line(108, 334.5, 603, 334.5, "#b00c1c");
line(108, 341.5, 603, 341.5, "#b00c1c");
curve(rsi, paneY, "#e8dc38", "", 1.3);

const signalColors = { x: "#84807c", r: "#f4121c", g: "#14801c" };
signals.forEach(([y, runs]) => {
  let i = 0;
  runs.split(" ").forEach(run => {
    for (let n = parseInt(run, 10); n > 0; n--, i++) rect(barX(i) - 1, Math.round(paneY(y)) - 1, 3, 3, signalColors[run.slice(-1)]);
  });
});
text(500, 361, "MACD", "", "#c01818");
text(500, 367, "Stoch(7,3)", "", "#d8d4e0");
text(500, 374, "Stoch(14,5)", "", "#1848c8");
text(500, 380, "RSI", "", "#d88a50");

/* Captions */
text(110, 59, "AUDCAD,H4&#160; 0.93730 0.93760 0.93570 0.93670");
text(110, 64, "top to bottom = 239 pips");
text(110, 70, "each third = 80 pips");
text(305, 63, "SMNB BUY LOW VERSION 3", "headline");
text(546, 59, "101 BUY LOW SD 3.3");
out.push('<circle cx="598.500" cy="57.500" r="2.500" fill="none" stroke="#7c98ac"/><path d="M597 58q1.500 1.500 3 0" fill="none" stroke="#7c98ac" stroke-width=".6"/>');
text(110, 158, "#169163498 buy");
text(110, 275, "MACD(12,26,9) -0.000805 0.001010&#160; Stoch(7,3,3) 91.9255 88.5357&#160; Stoch(14,3,5) 91.9825 91.9125");
text(110, 317, "RSI(5) 78.7489");
text(110, 353, "NB Meter_MACD(12,26)&#160; RSI(5)&#160; Stoch(7,3)&#160; Stoch(14,5)");

/* Price axis */
[[63, "0.94755"], [79, "0.94580"], [94, "0.94405"], [110, "0.94230"], [141, "0.93880"], [155, "0.93705"], [172, "0.93530"],
  [188, "0.93355"], [204, "0.93180"], [219, "0.93005"], [235, "0.92830"], [251, "0.92655"], [265, "0.92480"],
  [285, "0.00"], [350, "6"], [383, "0"]]
  .forEach(([y, label]) => { line(603, y - .5, 605, y - .5, "#7494a8"); text(605, y + 2, label); });
text(603, 273, "0.002277", "small");
text(603, 309, "-0.003324", "small");
[[124, "0.94063", "#fff"], [161, "0.93670", "#a4e0ec"], [196, "0.93267", "#fff"]]
  .forEach(([y, label, fill]) => { rect(604, y - 2, 18, 5, fill); text(604, y + 2, label, "on-light"); });
[[276, "80"], [302, "20"]].forEach(([y, label]) => { rect(604, y - 2, 5, 5, "#8a8c94"); text(604, y + 2, label, "small on-light"); });
[[314, "100"], [320, "70"], [334, "30"], [341, "0"]].forEach(([y, label]) => { rect(604, y - 2, 6, 5, "#c40c20"); text(604, y + 2, label, "on-red"); });

/* Time axis */
["12 Feb 2010", "15 Feb 16:00", "17 Feb 00:00", "18 Feb 08:00", "19 Feb 16:00", "22 Feb 20:00", "24 Feb 04:00", "25 Feb 12:00", "26 Feb 20:00", "2 Mar 08:00", "3 Mar"]
  .forEach((label, i) => { const x = Math.round(108 + i * 31.400); line(x + .5, 387, x + .5, 389, "#7494a8"); text(x, 393, label); });
text(493, 393, "ar 20:00");
rect(437, 388, 54, 5, "#30d0c8");
text(438, 392, "2 2 2 2010.03.05 12:00", "on-light");

document.getElementById("chart").innerHTML = out.join("");
```
